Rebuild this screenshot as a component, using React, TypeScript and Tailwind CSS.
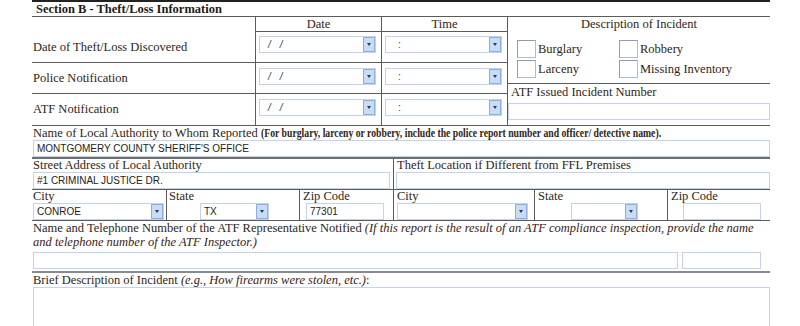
import type { ReactNode } from 'react';

const line = 'border-[#5b5b5b]';

function Field({ className = '', children }: { className?: string; children?: ReactNode }) {
  return (
    <div
      className={`h-[17px] border border-[#c4d3ea] bg-white flex items-center pl-[3px] text-[10px] text-[#222] font-['Liberation_Sans',Arial,sans-serif] ${className}`}
    >
      {children}
    </div>
  );
}

function Dropdown({ className = '', children }: { className?: string; children?: ReactNode }) {
  return (
    <div className={`h-[17px] border border-[#c4d3ea] bg-white flex ${className}`}>
      <div className="flex-1 flex items-center pl-[3px] text-[10px] text-[#222] font-['Liberation_Sans',Arial,sans-serif]">
        {children}
      </div>
      <div className="w-[12px] h-full bg-[#c9dcf6] border border-[#8caee0] flex items-center justify-center">
        <div className="w-0 h-0 border-l-[2px] border-r-[2px] border-t-[3px] border-l-transparent border-r-transparent border-t-[#2b3a58]" />
      </div>
    </div>
  );
}

function Check({ label }: { label: string }) {
  return (
    <div className="flex items-center h-[18px]">
      <div className="w-[19px] h-[18px] border border-[#aebcd0] border-t-[#8f9db3] border-l-[#8f9db3] bg-white" />
      <span className="ml-[2px] leading-[14px]">{label}</span>
    </div>
  );
}

function DateValue() {
  return (
    <span className="pl-[5px] italic text-[#2a3550]">
      /<span className="ml-[9px]">/</span>
    </span>
  );
}

function TimeValue() {
  return <span className="pl-[9px] text-[#2a3550]">:</span>;
}

function DateTimeColumn({ title, value }: { title: string; value: ReactNode }) {
  return (
    <div className={`w-[126px] border-l ${line} flex flex-col`}>
      <div className={`h-[15px] border-b ${line} text-center leading-[14px]`}>{title}</div>
      <div className={`h-[31px] border-b ${line} pt-[4px] pl-[3px]`}>
        <Dropdown className="w-[117px]">{value}</Dropdown>
      </div>
      <div className={`h-[31px] border-b ${line} pt-[5px] pl-[3px]`}>
        <Dropdown className="w-[117px]">{value}</Dropdown>
      </div>
      <div className="flex-1 pt-[5px] pl-[3px]">
        <Dropdown className="w-[117px]">{value}</Dropdown>
      </div>
    </div>
  );
}

export default function App() {
  return (
    <div className="w-[800px] h-[326px] bg-white overflow-hidden font-['Liberation_Serif','Times_New_Roman',serif] text-[12.5px] text-[#2e2520]">
      <div className="ml-[32px] w-[738px]">
        {/* section title */}
        <div className="h-[17px] border-t-2 border-b border-t-[#222] border-b-[#5b5b5b] pl-[4px] font-bold leading-[14px] text-[#1f1a17]">
          Section B - Theft/Loss Information
        </div>

        {/* dates, times and description */}
        <div className={`flex h-[109px] border-b ${line}`}>
          <div className="w-[223px] flex flex-col">
            <div className={`h-[46px] border-b ${line} pl-[1px] pt-[23px] leading-[14px]`}>Date of Theft/Loss Discovered</div>
            <div className={`h-[31px] border-b ${line} pl-[1px] flex items-center`}>Police Notification</div>
            <div className="flex-1 pl-[1px] flex items-center">ATF Notification</div>
          </div>
          <DateTimeColumn title="Date" value={<DateValue />} />
          <DateTimeColumn title="Time" value={<TimeValue />} />
          <div className={`flex-1 border-l ${line} flex flex-col`}>
            <div className={`h-[67px] border-b ${line}`}>
              <div className="h-[15px] text-center leading-[14px]">Description of Incident</div>
              <div className="grid grid-cols-[102px_1fr] gap-y-[2px] pl-[9px] pt-[8px]">
                <Check label="Burglary" />
                <Check label="Robbery" />
                <Check label="Larceny" />
                <Check label="Missing Inventory" />
              </div>
            </div>
            <div className="h-[17px] pl-[3px] leading-[17px]">ATF Issued Incident Number</div>
            <Field className="mt-[2px]" />
          </div>
        </div>

        {/* local authority */}
        <div className="h-[33px] border-b-2 border-[#6e6e6e]">
          <div className="h-[14px] pl-[1px] leading-[14px] whitespace-nowrap">
            Name of Local Authority to Whom Reported{' '}
            <span className="inline-block text-[12px] font-bold origin-left scale-x-[0.81]">
              (For burglary, larceny or robbery, include the police report number and officer/ detective name).
            </span>
          </div>
          <Field className="ml-[1px]">MONTGOMERY COUNTY SHERIFF'S OFFICE</Field>
        </div>

        <div className={`flex h-[31px] border-b ${line}`}>
          <div className="w-[361px]">
            <div className="h-[13px] pl-[1px] leading-[13px]">Street Address of Local Authority</div>
            <Field className="ml-[1px] w-[357px]">#1 CRIMINAL JUSTICE DR.</Field>
          </div>
          <div className={`flex-1 border-l ${line}`}>
            <div className="h-[13px] pl-[3px] leading-[13px]">Theft Location if Different from FFL Premises</div>
            <Field className="ml-[2px]" />
          </div>
        </div>

        <div className={`flex h-[31px] border-b ${line}`}>
          <div className="w-[134px]">
            <div className="h-[13px] pl-[1px] leading-[13px]">City</div>
            <Dropdown className="ml-[1px] w-[131px]">CONROE</Dropdown>
          </div>
          <div className={`w-[133px] border-l ${line}`}>
            <div className="h-[13px] pl-[2px] leading-[13px]">State</div>
            <Dropdown className="ml-[33px] w-[69px]">TX</Dropdown>
          </div>
          <div className={`w-[94px] border-l ${line}`}>
            <div className="h-[13px] pl-[3px] leading-[13px]">Zip Code</div>
            <Field className="ml-[6px] w-[78px]">77301</Field>
          </div>
          <div className={`w-[141px] border-l ${line}`}>
            <div className="h-[13px] pl-[3px] leading-[13px]">City</div>
            <Dropdown className="ml-[3px] w-[131px]" />
          </div>
          <div className={`w-[133px] border-l ${line}`}>
            <div className="h-[13px] pl-[3px] leading-[13px]">State</div>
            <Dropdown className="ml-[36px] w-[67px]" />
          </div>
          <div className={`flex-1 border-l ${line}`}>
            <div className="h-[13px] pl-[3px] leading-[13px]">Zip Code</div>
            <Field className="ml-[15px] w-[78px]" />
          </div>
        </div>

        {/* ATF representative */}
        <div className="h-[52px] border-b-2 border-[#8a8a8a]">
          <div className="pl-[1px] leading-[14px] whitespace-nowrap">
            Name and Telephone Number of the ATF Representative Notified{' '}
            <span className="italic text-[#3c2018]">
              (If this report is the result of an ATF compliance inspection, provide the name
              <br />
              and telephone number of the ATF Inspector.)
            </span>
          </div>
          <div className="flex mt-[3px]">
            <Field className="ml-[1px] w-[645px]" />
            <Field className="ml-[4px] w-[79px]" />
          </div>
        </div>

        {/* brief description */}
        <div className="pt-[1px]">
          <div className="h-[13px] pl-[1px] leading-[13px]">
            Brief Description of Incident{' '}
            <span className="italic text-[#3c2018]">(e.g., How firearms were stolen, etc.)</span>:
          </div>
          <Field className="ml-[1px] h-[40px]" />
        </div>
      </div>
    </div>
  );
}
